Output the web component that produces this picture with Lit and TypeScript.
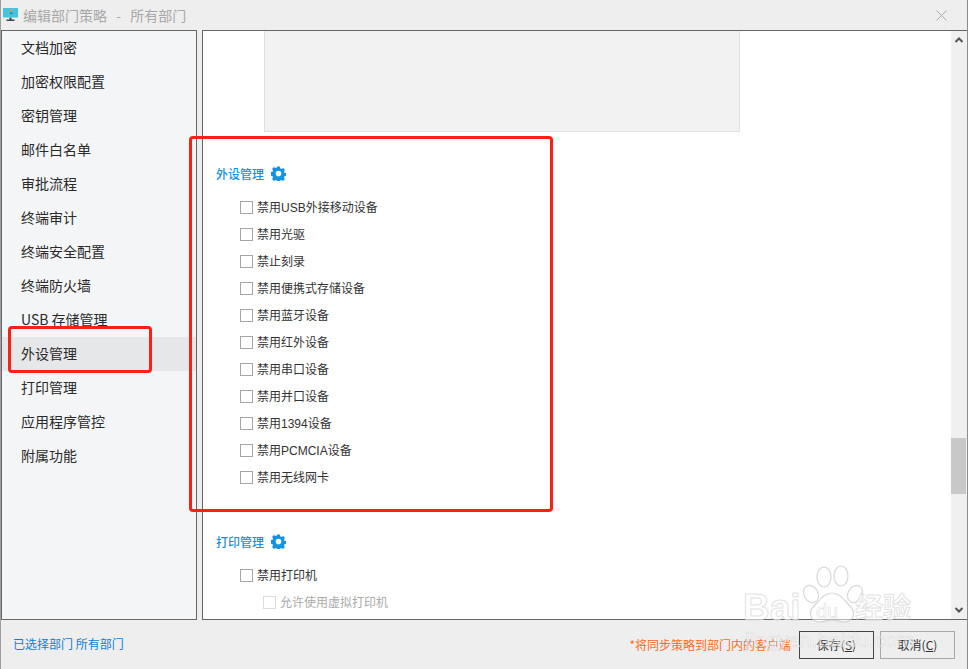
import { LitElement, html, css, svg } from "lit";
import { customElement } from "lit/decorators.js";

const NAV = ["文档加密","加密权限配置","密钥管理","邮件白名单","审批流程","终端审计","终端安全配置","终端防火墙","USB 存储管理","外设管理","打印管理","应用程序管控","附属功能"];
const DEVICES = ["禁用USB外接移动设备","禁用光驱","禁止刻录","禁用便携式存储设备","禁用蓝牙设备","禁用红外设备","禁用串口设备","禁用并口设备","禁用1394设备","禁用PCMCIA设备","禁用无线网卡"];

const gear = svg`<svg class="gear" viewBox="0 0 16 16" width="15" height="15"><path fill-rule="evenodd" fill="#1592e0" d="M6.6.5h2.8l.4 2 1.3.6 1.8-1 2 2-1.1 1.7.6 1.4 2 .4v2.8l-2 .4-.6 1.4 1.1 1.7-2 2-1.8-1-1.3.6-.4 2H6.6l-.4-2-1.3-.6-1.8 1-2-2 1.1-1.7-.6-1.4-2-.4V6.6l2-.4.6-1.4-1.1-1.7 2-2 1.8 1 1.3-.6zM8 5a3 3 0 1 0 0 6 3 3 0 0 0 0-6z"/></svg>`;

@customElement("app-root")
export class AppRoot extends LitElement {
  static styles = css`
    :host { display: block; width: 968px; height: 669px; position: relative; overflow: hidden; font-family: "Noto Sans CJK SC", "Liberation Sans", sans-serif; font-size: 12px; color: #333; }
    .win { box-sizing: border-box; width: 968px; height: 669px; background: #eeeeee; border-left: 1px solid #a0a0a0; border-right: 1px solid #8c8c8c; display: flex; flex-direction: column; }
    .title { height: 30px; flex: none; display: flex; align-items: center; padding: 0 20px 0 2px; color: #a8a8a8; font-size: 14px; word-spacing: 6px; }
    .title .logo { margin-right: 5px; flex: none; }
    .title .name { flex: 1; }
    .main { height: 590px; flex: none; display: flex; gap: 5px; }
    .nav { box-sizing: border-box; width: 196px; flex: none; background: #f4f5f7; border: 1px solid #666; display: flex; flex-direction: column; }
    .nav div { box-sizing: border-box; height: 34px; flex: none; line-height: 32px; padding: 0 0 2px 19px; font-size: 14px; color: #2a2a2a; }
    .nav div.on { background: #e6e7e8; }
    .panel { box-sizing: border-box; flex: 1; min-width: 0; background: #fff; border: 1px solid #666; border-right: none; display: flex; overflow: hidden; }
    .scroll { flex: 1; min-width: 0; overflow: hidden; }
    .preview { box-sizing: border-box; height: 101px; width: 476px; margin-left: 61px; background: #f2f2f2; border: 1px solid #e0e0e0; border-top: none; }
    .sec { margin: 31px 0 0 13px; height: 20px; display: flex; align-items: center; gap: 7px; color: #1592e0; font-size: 12px; font-weight: 500; }
    .sec.next { margin-top: 40px; }
    .list { margin: 11px 0 0 37px; display: flex; flex-direction: column; }
    .row { box-sizing: border-box; height: 27px; display: flex; align-items: center; gap: 4px; font-family: "Liberation Sans", "Noto Sans CJK SC", sans-serif; }
    .row span { display: block; margin-top: -2px; }
    .row i { box-sizing: border-box; width: 13px; height: 13px; background: #fff; border: 1px solid #a6a6a6; flex: none; }
    .row.off { margin-left: 23px; color: #aaa; }
    .row.off i { border-color: #dcdcdc; }
    .bar { width: 16px; flex: none; background: #f0f0f0; display: flex; flex-direction: column; align-items: center; position: relative; }
    .bar svg { height: 17px; display: block; }
    .bar .track { flex: 1; width: 100%; position: relative; }
    .bar .thumb { position: absolute; left: 0; right: 1px; top: 390px; height: 56px; background: #c8c8c8; }
    .foot { flex: 1; display: flex; align-items: center; padding: 0 12px 0 12px; }
    .sel { color: #0f7fd8; flex: 1; margin-top: -2px; }
    .hint { color: #ff6a1a; margin-right: 8px; }
    button { box-sizing: border-box; width: 75px; height: 28px; padding: 0; background: #eee; border: 1px solid #444; font: inherit; font-size: 12px; color: #333; }
    button.sec-btn { margin-left: 6px; border-color: #a8a8a8; }
    button u { text-underline-offset: 1px; }
    .mark { position: absolute; box-sizing: border-box; border: 3px solid #fb2014; border-radius: 4px; pointer-events: none; }
    .mark.a { left: 189px; top: 136px; width: 364px; height: 376px; }
    .mark.b { left: 8px; top: 326px; width: 144px; height: 47px; }
    .wm { position: absolute; left: 738px; top: 565px; width: 230px; height: 90px; pointer-events: none; color: rgba(255,255,255,.6); font-family: "Liberation Sans", sans-serif; }
    .wm span { position: absolute; white-space: nowrap; -webkit-text-stroke: 1px rgba(200,200,200,.55); }
    .wm .bai { left: 5px; top: 24px; font-size: 37px; font-weight: 700; line-height: 1; letter-spacing: 0; }
    .wm .du { left: 78px; top: 36px; font-size: 20px; font-weight: 400; line-height: 1; -webkit-text-stroke-width: .7px; }
    .wm .jy { left: 117px; top: 25px; font-family: "Noto Sans CJK SC", sans-serif; font-size: 28px; font-weight: 700; line-height: 1.2; letter-spacing: 0; }
    .wm .url { left: 7px; top: 63px; font-size: 21px; line-height: 1.1; -webkit-text-stroke-width: .6px; color: rgba(255,255,255,.5); }
    .wm svg { position: absolute; left: 62px; top: 0; }
  `;

  render() {
    return html`
      <div class="win">
        <div class="title">
          <svg class="logo" width="15" height="14" viewBox="0 0 15 14"><rect y="0" width="15" height="9.5" rx=".5" fill="#46c3de"/><rect x="7" y="1" width="2" height="2.5" fill="#e8913c"/><rect x="7" y="4.5" width="2.5" height="1.5" fill="#2a7d94"/><rect x="6.5" y="9.5" width="2" height="2.5" fill="#3b4a50"/><rect x="3.5" y="11.5" width="8" height="1.5" fill="#3b4a50"/></svg>
          <span class="name">编辑部门策略 - 所有部门</span>
          <svg width="11" height="11" viewBox="0 0 11 11"><path d="M.5.5l10 10M10.5.5l-10 10" stroke="#aaa" fill="none"/></svg>
        </div>
        <div class="main">
          <div class="nav">${NAV.map((n) => html`<div class=${n === "外设管理" ? "on" : ""}>${n}</div>`)}</div>
          <div class="panel">
            <div class="scroll">
              <div class="preview"></div>
              <div class="sec">外设管理 ${gear}</div>
              <div class="list">${DEVICES.map((d) => html`<div class="row"><i></i><span>${d}</span></div>`)}</div>
              <div class="sec next">打印管理 ${gear}</div>
              <div class="list">
                <div class="row"><i></i><span>禁用打印机</span></div>
                <div class="row off"><i></i><span>允许使用虚拟打印机</span></div>
              </div>
            </div>
            <div class="bar">
              <svg width="10" viewBox="0 0 10 17"><path d="M1.5 11L5 7.5 8.5 11" stroke="#555" stroke-width="2" fill="none"/></svg>
              <div class="track"><div class="thumb"></div></div>
              <svg width="10" viewBox="0 0 10 17"><path d="M1.5 6L5 9.5 8.5 6" stroke="#555" stroke-width="2" fill="none"/></svg>
            </div>
          </div>
        </div>
        <div class="foot">
          <span class="sel">已选择部门 所有部门</span>
          <span class="hint">*将同步策略到部门内的客户端</span>
          <button>保存(<u>S</u>)</button>
          <button class="sec-btn">取消(<u>C</u>)</button>
        </div>
      </div>
      <div class="mark a"></div>
      <div class="mark b"></div>
      <div class="wm">
        <svg width="66" height="62" viewBox="0 0 66 62" fill="rgba(255,255,255,.5)" stroke="rgba(190,190,190,.6)" stroke-width="1.2">
          <ellipse cx="24" cy="12" rx="7" ry="10"/><ellipse cx="41" cy="11" rx="7" ry="10"/><ellipse cx="11" cy="29" rx="7" ry="9" transform="rotate(-30 11 29)"/><ellipse cx="55" cy="29" rx="7" ry="9" transform="rotate(30 55 29)"/>
          <path d="M32 28c8 0 12 7 18 13 7 7 3 16-6 16-5 0-8-2-12-2s-7 2-12 2c-9 0-13-9-6-16 6-6 10-13 18-13z"/>
        </svg>
        <span class="bai">Bai</span>
        <span class="du">du</span>
        <span class="jy">经验</span>
        <span class="url">jingyan.baidu.com</span>
      </div>
    `;
  }
}
